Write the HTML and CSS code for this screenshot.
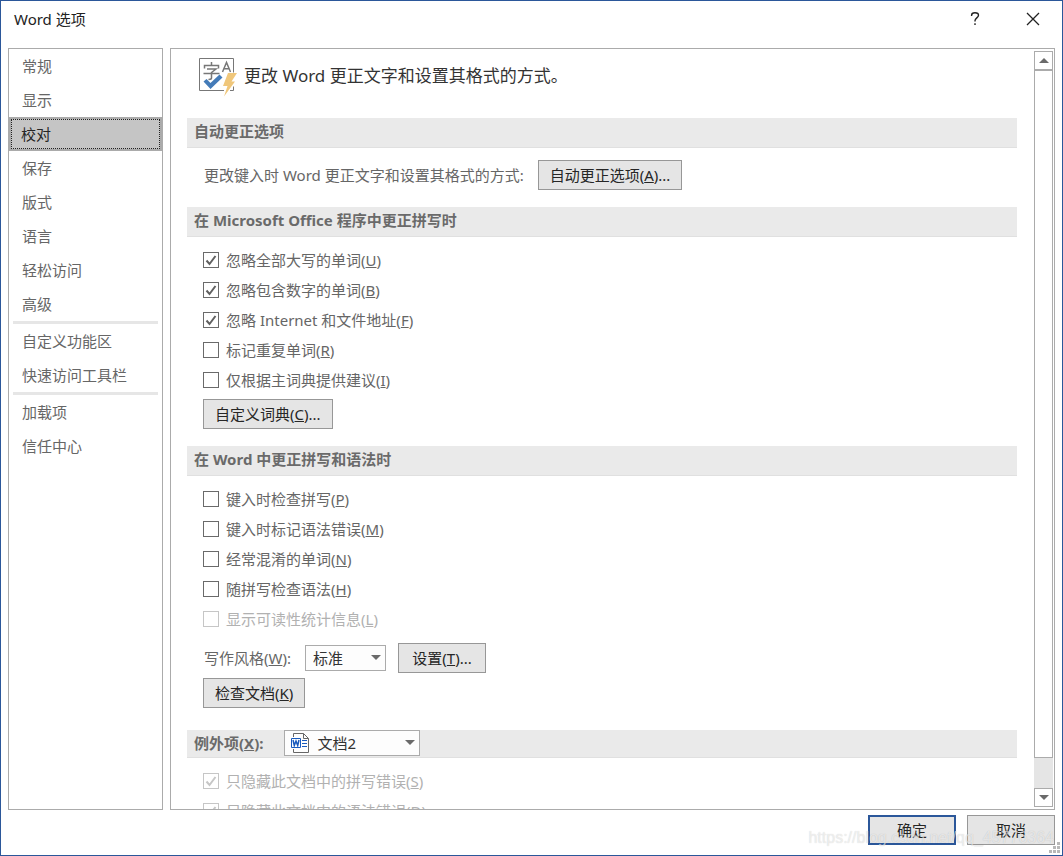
FILE: index.html
```html
<!DOCTYPE html>
<html lang="zh-CN">
<head>
    <meta charset="utf-8">
    <title>Word 选项</title>
    <link rel="stylesheet" href="styles.css">
</head>
<body>
    <div class="dialog">
        <header class="title-bar">
            <h1 class="title">Word 选项</h1>
            <button type="button" class="title-button" aria-label="帮助">
                <svg width="14" height="16" viewBox="0 0 14 16" fill="none" stroke="#222" stroke-width="1.4">
                    <path d="M3.6 5V4.2C3.6 2.6 5 1.7 7 1.7s3.5 1 3.5 2.6c0 2.4-3.5 2.8-3.5 5.4v.8M7 12.3v1.8"/>
                </svg>
            </button>
            <button type="button" class="title-button" aria-label="关闭">
                <svg width="14" height="14" viewBox="0 0 14 14" fill="none" stroke="#222" stroke-width="1.3">
                    <path d="M1 1l12 12M13 1L1 13"/>
                </svg>
            </button>
        </header>

        <div class="columns">
            <nav class="sidebar">
                <a href="#" class="nav-item">常规</a>
                <a href="#" class="nav-item">显示</a>
                <a href="#" class="nav-item selected">校对</a>
                <a href="#" class="nav-item">保存</a>
                <a href="#" class="nav-item">版式</a>
                <a href="#" class="nav-item">语言</a>
                <a href="#" class="nav-item">轻松访问</a>
                <a href="#" class="nav-item">高级</a>
                <div class="separator"></div>
                <a href="#" class="nav-item">自定义功能区</a>
                <a href="#" class="nav-item">快速访问工具栏</a>
                <div class="separator"></div>
                <a href="#" class="nav-item">加载项</a>
                <a href="#" class="nav-item">信任中心</a>
            </nav>

            <main class="panel">
                <div class="content">
                    <div class="intro">
                        <svg class="intro-icon" width="38" height="40" viewBox="0 0 38 40" fill="none">
                            <path d="M25 32.5H.5V.5h34v14M34.500 28.500v4H31" stroke="#777"/>
                            <path d="M12.500 4v3M5.500 10.500V7.500h14v3M8 11h9l-4.500 3.500v5.500c0 1.200-.6 1.500-3 1.500M4.500 15.500h16" stroke="#777" stroke-width="1.500"/>
                            <path d="M23.500 14l4-9.500 4 9.500M25 10.800h5" stroke="#777" stroke-width="1.500"/>
                            <path d="M4.500 23.500l3-2.500 4 4L20.500 16.500l3 3-12 11.500z" fill="#447bb8"/>
                            <path d="M29 15h9l-5.500 8.500H36L25 38.500l3.500-10.500H24z" fill="#f0c77b"/>
                        </svg>
                        <p class="intro-text">更改 Word 更正文字和设置其格式的方式。</p>
                    </div>

                    <h2 class="section-title">自动更正选项</h2>
                    <div class="section">
                        <div class="row">
                            <span class="row-label">更改键入时 Word 更正文字和设置其格式的方式:</span>
                            <button type="button" class="button">自动更正选项(<u>A</u>)...</button>
                        </div>
                    </div>

                    <h2 class="section-title">在 Microsoft Office 程序中更正拼写时</h2>
                    <div class="section">
                        <label class="check"><input type="checkbox" checked>忽略全部大写的单词(<u>U</u>)</label>
                        <label class="check"><input type="checkbox" checked>忽略包含数字的单词(<u>B</u>)</label>
                        <label class="check"><input type="checkbox" checked>忽略 Internet 和文件地址(<u>F</u>)</label>
                        <label class="check"><input type="checkbox">标记重复单词(<u>R</u>)</label>
                        <label class="check"><input type="checkbox">仅根据主词典提供建议(<u>I</u>)</label>
                        <div class="row">
                            <button type="button" class="button">自定义词典(<u>C</u>)...</button>
                        </div>
                    </div>

                    <h2 class="section-title">在 Word 中更正拼写和语法时</h2>
                    <div class="section">
                        <label class="check"><input type="checkbox">键入时检查拼写(<u>P</u>)</label>
                        <label class="check"><input type="checkbox">键入时标记语法错误(<u>M</u>)</label>
                        <label class="check"><input type="checkbox">经常混淆的单词(<u>N</u>)</label>
                        <label class="check"><input type="checkbox">随拼写检查语法(<u>H</u>)</label>
                        <label class="check disabled"><input type="checkbox" disabled>显示可读性统计信息(<u>L</u>)</label>
                        <div class="row style-row">
                            <label for="writingStyle" class="row-label">写作风格(<u>W</u>):</label>
                            <div class="select-box">
                                <select id="writingStyle" class="select">
                                    <option>标准</option>
                                </select>
                            </div>
                            <button type="button" class="button wide">设置(<u>T</u>)...</button>
                        </div>
                        <div class="row">
                            <button type="button" class="button">检查文档(<u>K</u>)</button>
                        </div>
                    </div>

                    <div class="section-title exceptions">
                        <label for="exceptionDoc">例外项(<u>X</u>):</label>
                        <div class="select-box">
                            <svg class="doc-icon" width="18" height="20" viewBox="0 0 18 20" fill="none">
                                <path d="M2.500 4V.5h10l5 5v14h-15V16M12.500.5v5h5" stroke="#666"/>
                                <path d="M.5 5.500h9v9h-9z" fill="#fff" stroke="#185abd"/>
                                <path d="M2 7l1.300 5.500L5 8l1.700 4.500L8 7" stroke="#185abd" stroke-width="1.500"/>
                                <path d="M11 7.500h5M11 10.500h5M11 13.500h5" stroke="#185abd"/>
                            </svg>
                            <select id="exceptionDoc" class="select document">
                                <option>文档2</option>
                            </select>
                        </div>
                    </div>
                    <div class="section">
                        <label class="check disabled"><input type="checkbox" checked disabled>只隐藏此文档中的拼写错误(<u>S</u>)</label>
                        <label class="check disabled"><input type="checkbox" checked disabled>只隐藏此文档中的语法错误(<u>D</u>)</label>
                    </div>
                </div>

                <div class="scrollbar">
                    <button type="button" class="scroll-button up" aria-label="向上"></button>
                    <div class="thumb"></div>
                    <div class="track"></div>
                    <button type="button" class="scroll-button down" aria-label="向下"></button>
                </div>
            </main>
        </div>

        <footer class="footer">
            <button type="button" class="button wide default">确定</button>
            <button type="button" class="button wide">取消</button>
        </footer>

        <span class="watermark">https://blog.csdn.net/qq_45776364</span>
        <svg class="grip" width="11" height="11" viewBox="0 0 11 11" fill="#b8b8b8">
            <path d="M8 0h3v3H8zM4 4h3v3H4zM8 4h3v3H8zM0 8h3v3H0zM4 8h3v3H4zM8 8h3v3H8z"/>
        </svg>
    </div>
</body>
</html>
```
FILE: styles.css
```css
* {
    box-sizing: border-box;
}
body {
    margin: 0;
    font-family: "Noto Sans", "Noto Sans CJK SC", sans-serif;
    font-size: 15px;
    line-height: 20px;
    color: #666;
    background-color: #fff;
}
button, select, input {
    font: inherit;
    margin: 0;
}
.dialog {
    position: relative;
    display: flex;
    flex-direction: column;
    height: 100vh;
    padding: 0 7px;
    border: 1px solid #2b579a;
}

/* title bar */
.title-bar {
    display: flex;
    align-items: center;
    gap: 30px;
    height: 47px;
    padding: 0 8px 12px 6px;
}
.title {
    flex: 1;
    margin: 0;
    font-size: 15px;
    font-weight: normal;
    color: #222;
}
.title-button {
    display: flex;
    align-items: center;
    justify-content: center;
    width: 28px;
    height: 28px;
    padding: 0;
    border: none;
    background: none;
}

.columns {
    display: flex;
    flex: 1;
    gap: 7px;
    min-height: 0;
}

/* sidebar */
.sidebar {
    flex: 0 0 155px;
    border: 1px solid #ababab;
}
.nav-item {
    display: block;
    padding: 7px 13px;
    color: #666;
    text-decoration: none;
}
.nav-item.selected {
    padding: 5px 10px;
    border: 2px solid #ababab;
    background-color: #c5c5c5;
    color: #262626;
    outline: 1px dotted #222;
    outline-offset: -3px;
}
.separator {
    height: 3px;
    margin: 0 4px;
    background-color: #e6e6e6;
}

/* right panel */
.panel {
    display: flex;
    flex: 1;
    gap: 17px;
    min-width: 0;
    padding-left: 16px;
    border: 1px solid #ababab;
}
.content {
    flex: 1;
    min-width: 0;
    overflow: hidden;
}
.intro {
    display: flex;
    align-items: center;
    gap: 7px;
    height: 69px;
    padding: 0 12px 16px;
}
.intro-icon {
    margin-top: 4px;
}
.intro-text {
    margin: 0;
    font-size: 17px;
    color: #333;
}
.section-title {
    display: flex;
    align-items: center;
    height: 30px;
    margin: 0;
    padding: 0 7px 3px;
    border-bottom: 1px solid #e0e0e0;
    background-color: #eaeaea;
    font-size: 15px;
    font-weight: bold;
    color: #6a6a6a;
}
.section {
    padding: 8px 16px 17px;
}
.row {
    display: flex;
    align-items: center;
    gap: 12px;
    margin-top: 4px;
}
.row-label {
    padding: 0 2px 0 1px;
}
.style-row {
    margin: 9px 0 5px;
}
.button {
    height: 30px;
    padding: 0 11px;
    border: 1px solid #979797;
    background-color: #e5e5e5;
    color: #262626;
}
.button.wide {
    width: 88px;
}
.button.default {
    border: 2px solid #2b579a;
}
.check {
    display: flex;
    align-items: center;
    height: 30px;
}
.check input {
    appearance: none;
    width: 16px;
    height: 16px;
    margin-right: 7px;
    border: 1px solid #6a6a6a;
    background-color: #fff;
}
.check input:checked {
    background-image: url("data:image/svg+xml,%3Csvg xmlns='http://www.w3.org/2000/svg' viewBox='0 0 14 14'%3E%3Cpath d='M2.500 7.500l3 3.500 6-8' fill='none' stroke='%23606060' stroke-width='2'/%3E%3C/svg%3E");
}
.check.disabled {
    color: #b1b1b1;
}
.check.disabled input {
    border-color: #c6c6c6;
}
.check.disabled input:checked {
    background-image: url("data:image/svg+xml,%3Csvg xmlns='http://www.w3.org/2000/svg' viewBox='0 0 14 14'%3E%3Cpath d='M2.500 7.500l3 3.500 6-8' fill='none' stroke='%23c6c6c6' stroke-width='2'/%3E%3C/svg%3E");
}

/* drop-downs */
.select-box {
    position: relative;
}
.select-box::after {
    content: "";
    position: absolute;
    top: 10px;
    right: 5px;
    border: 5px solid transparent;
    border-top-color: #6a6a6a;
    border-bottom: none;
    pointer-events: none;
}
.select {
    appearance: none;
    display: block;
    width: 81px;
    height: 26px;
    padding: 0 7px;
    border: 1px solid #ababab;
    border-radius: 0;
    background-color: #fdfdfd;
    color: #333;
}
.select.document {
    width: 136px;
    padding-left: 32px;
    font-weight: normal;
}
.doc-icon {
    position: absolute;
    top: 3px;
    left: 7px;
}
.exceptions {
    gap: 21px;
    height: 28px;
    margin-top: 5px;
    padding-bottom: 1px;
}

/* scrollbar */
.scrollbar {
    display: flex;
    flex-direction: column;
    width: 19px;
    margin: 2px 1px 2px 0;
    background-color: #e5e5e5;
}
.scroll-button {
    display: flex;
    align-items: center;
    justify-content: center;
    height: 19px;
    padding: 0;
    border: 1px solid #ababab;
    background-color: #fff;
}
.scroll-button::before {
    content: "";
    border: 5px solid transparent;
}
.up::before {
    border-bottom-color: #6a6a6a;
    border-top: none;
}
.down::before {
    border-top-color: #6a6a6a;
    border-bottom: none;
}
.thumb {
    flex: 23;
    border: 1px solid #ababab;
    background-color: #fff;
}
.track {
    flex: 1;
}

/* footer */
.footer {
    display: flex;
    justify-content: flex-end;
    gap: 11px;
    padding: 5px 0 10px;
}
.watermark {
    position: absolute;
    right: 8px;
    bottom: 7px;
    font-family: "Liberation Sans", sans-serif;
    font-size: 16px;
    color: rgba(255, 255, 255, 0.6);
    text-shadow: 0 0 1px rgba(0, 0, 0, 0.2);
    pointer-events: none;
}
.grip {
    position: absolute;
    right: 2px;
    bottom: 2px;
}
```
